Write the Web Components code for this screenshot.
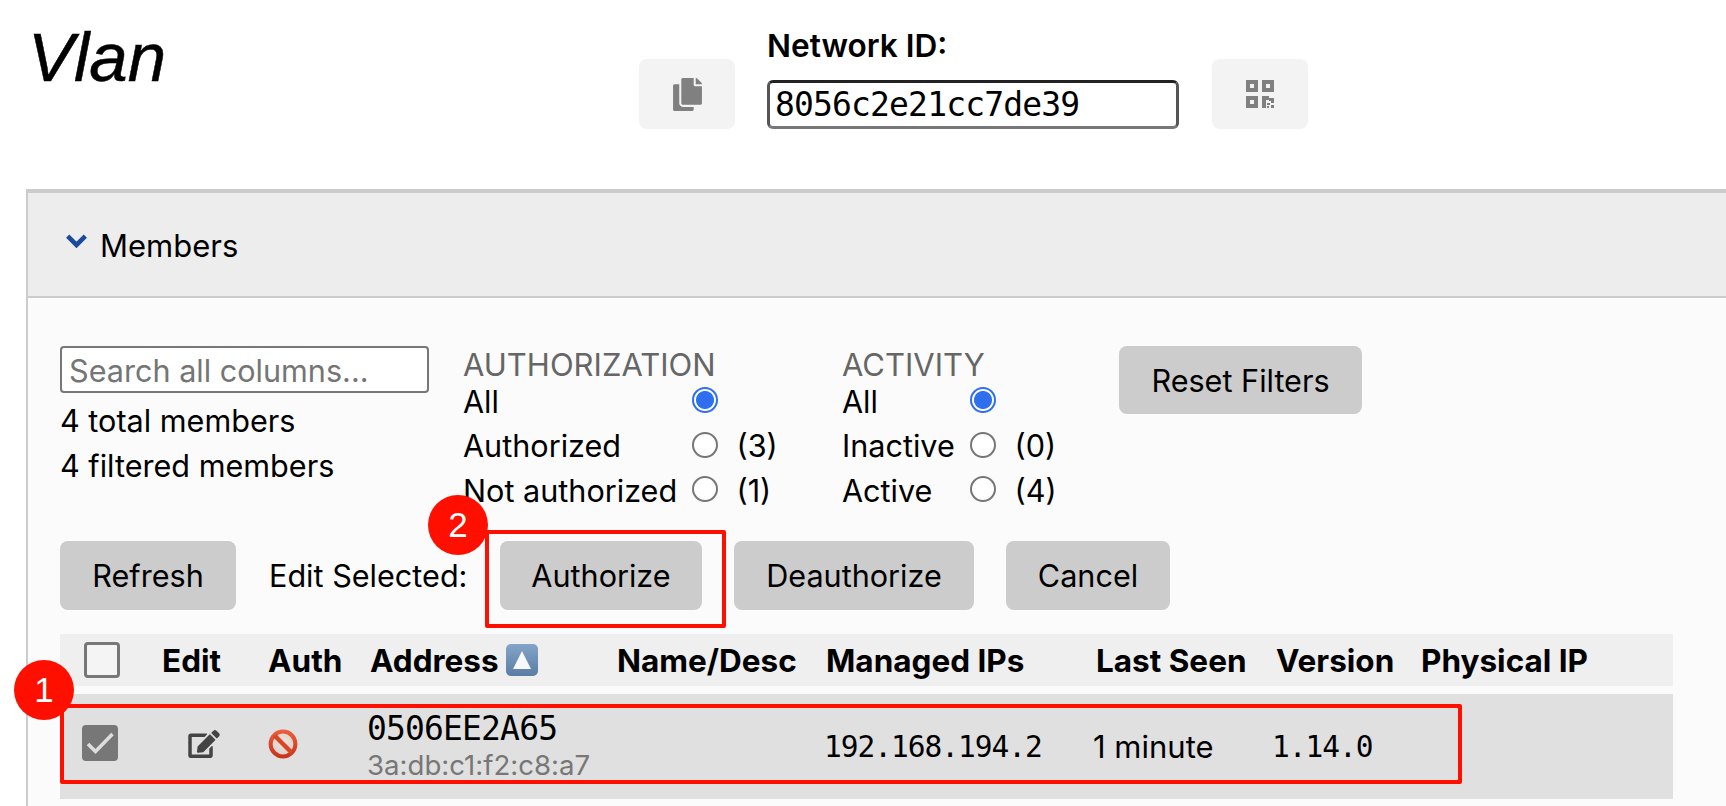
<!DOCTYPE html>
<html lang="en">
<head>
<meta charset="utf-8">
<title>Vlan</title>
<style>
  html, body { margin: 0; height: 100%; overflow: hidden; background: #fff; }
  body { position: relative; font-family: Inter, "Liberation Sans", sans-serif; font-size: 30.6px; color: #000; }
</style>
</head>
<body>
<network-header name="Vlan" network-id="8056c2e21cc7de39"></network-header>
<members-panel>
  <members-filters></members-filters>
  <members-actions></members-actions>
  <members-table></members-table>
</members-panel>
<note-box style="left:60px;top:704px;width:1402px;height:80px"></note-box>
<note-box style="left:485px;top:530px;width:241px;height:98px"></note-box>
<note-bubble style="left:14px;top:660px">1</note-bubble>
<note-bubble style="left:428px;top:495px">2</note-bubble>

<script>
// small helper, every element below just sets its own shadow markup
class ShadowEl extends HTMLElement {
  render(html) {
    this.shadow = this.shadowRoot || this.attachShadow({ mode: 'open' });
    this.shadow.innerHTML = html;
  }
}

class GreyButton extends ShadowEl {
  connectedCallback() {
    this.render(`
      <style>
        :host { display: block; }
        button {
          display: block; width: 100%; height: 100%; border: 0; padding: 0; margin: 0;
          background: #ccc; border-radius: 8px; color: #000; cursor: pointer;
          font: inherit; letter-spacing: inherit;
        }
      </style>
      <button><slot></slot></button>`);
  }
}
customElements.define('grey-button', GreyButton);

class IconButton extends ShadowEl {
  connectedCallback() {
    this.render(`
      <style>
        :host { display: flex; align-items: center; justify-content: center; width: 96px; height: 70px;
                background: #f3f3f3; border-radius: 8px; color: #808080; cursor: pointer; }
      </style>
      <slot></slot>`);
  }
}
customElements.define('icon-button', IconButton);

class NetworkHeader extends ShadowEl {
  connectedCallback() {
    const name = this.getAttribute('name');
    const id = this.getAttribute('network-id');
    this.render(`
      <style>
        :host { display: flex; height: 189px; box-sizing: border-box; }
        h1 { width: 639px; margin: 0; padding: 16px 0 0 28px; box-sizing: border-box; font: italic 400 69px/84px "Liberation Sans", sans-serif; -webkit-text-stroke: .5px #000; }
        icon-button { margin-top: 59px; }
        .net { width: 412px; margin: 0 33px 0 32px; padding-top: 26px; box-sizing: border-box; }
        label { display: block; height: 54px; font-size: 31.6px; line-height: 40px; font-weight: 600; }
        input { display: block; width: 100%; height: 49px; box-sizing: border-box; margin: 0; padding: 0 5px;
                border: 3.5px solid; border-color: #222 #555 #777 #555; border-radius: 6px; background: #fff; color: #000; outline: 0;
                font: 33px "DejaVu Sans Mono", monospace; letter-spacing: -.85px; }
        svg { display: block; }
      </style>
      <h1>${name}</h1>
      <icon-button>
        <svg width="29" height="33" viewBox="0 0 448 512" fill="currentColor"><path d="M320 448v40c0 13.255-10.745 24-24 24H24c-13.255 0-24-10.745-24-24V120c0-13.255 10.745-24 24-24h72v296c0 30.879 25.121 56 56 56h168zm0-344V0H152c-13.255 0-24 10.745-24 24v368c0 13.255 10.745 24 24 24h272c13.255 0 24-10.745 24-24V128H344c-13.2 0-24-10.8-24-24zm120.971-31.029L375.029 7.029A24 24 0 0 0 358.059 0H352v96h96v-6.059a24 24 0 0 0-7.029-16.97z"/></svg>
      </icon-button>
      <div class="net">
        <label>Network ID:</label>
        <input value="${id}" spellcheck="false">
      </div>
      <icon-button>
        <svg width="28" height="28" viewBox="0 0 28 28" fill="currentColor">
          <path fill-rule="evenodd" d="M0 0h12v12H0zM4 4v4h4V4zM16 0h12v12H16zM20 4v4h4V4zM0 16h12v12H0zM4 20v4h4v-4z"/>
          <path d="M16 16h4v12h-4zM20 16h3v4h-3zM23 18h5v5h-3v-2h-2zM21 23h3v2h-3zM25 25h3v3h-3zM21 26h2v2h-2z"/>
        </svg>
      </icon-button>`);
  }
}
customElements.define('network-header', NetworkHeader);

class MembersPanel extends ShadowEl {
  connectedCallback() {
    this.render(`
      <style>
        :host { display: block; margin: 0 -10px 0 26px; border: solid #ccc; border-width: 4px 0 0 2px; }
        .head { display: flex; align-items: center; height: 103px; padding-left: 38px; background: #ededed; border-bottom: 2px solid #ccc; }
        .head svg { display: block; margin: -8px 13px 0 0; }
        .head span { font-size: 31px; padding-top: 2px; }
        .body { height: 600px; padding: 48px 0 0 32px; background: #fbfbfb; }
      </style>
      <div class="head">
        <svg width="21" height="14" viewBox="0 0 21 14" fill="none" stroke="#1c4a9c" stroke-width="4.6"><path d="M1.7 2.2l8.8 8.8 8.8-8.8"/></svg>
        <span>Members</span>
      </div>
      <div class="body"><slot></slot></div>`);
  }
}
customElements.define('members-panel', MembersPanel);

class FilterGroup extends ShadowEl {
  connectedCallback() {
    const labelWidth = this.getAttribute('label-width');
    const opts = JSON.parse(this.getAttribute('options'));
    const rows = opts.map((o, i) => `
      <span class="lbl">${o[0]}</span>
      <span class="radio ${i == 0 ? 'on' : ''}"></span>
      <span class="cnt">${o[1]}</span>`).join('');
    this.render(`
      <style>
        :host { display: block; }
        .title { height: 33px; line-height: 37px; color: #666; font-size: 31px; }
        .grid { display: grid; grid-template-columns: ${labelWidth}px 26px auto; grid-auto-rows: 44.5px; align-items: center; }
        .lbl { white-space: nowrap; }
        .radio { width: 26px; height: 26px; box-sizing: border-box; border: 2px solid #767676; border-radius: 50%; background: #fff; margin-top: -2px; }
        .radio.on { border-color: #2f6fed; background: radial-gradient(circle, #2f6fed 0 8.5px, #fff 9.5px); }
        .cnt { padding-left: 18.5px; }
      </style>
      <div class="title">${this.getAttribute('title')}</div>
      <div class="grid">${rows}</div>`);
  }
}
customElements.define('filter-group', FilterGroup);

class MembersFilters extends ShadowEl {
  connectedCallback() {
    this.render(`
      <style>
        :host { display: flex; height: 195px; }
        .search { width: 369px; margin-right: 34px; }
        input { display: block; width: 100%; height: 47px; box-sizing: border-box; margin: 0; padding: 2px 7px 0;
                border: 2px solid #777; border-radius: 4px; background: #fff; font: inherit; outline: 0; }
        input::placeholder { color: #757575; opacity: 1; }
        .count { line-height: 45px; }
        .count:first-of-type { margin-top: 5px; }
        filter-group.auth { width: 379px; }
        filter-group.act { width: 277px; }
        grey-button { width: 243px; height: 68px; }
      </style>
      <div class="search">
        <input placeholder="Search all columns...">
        <div class="count">4 total members</div>
        <div class="count">4 filtered members</div>
      </div>
      <filter-group class="auth" title="AUTHORIZATION" label-width="229"
        options='[["All",""],["Authorized","(3)"],["Not authorized","(1)"]]'></filter-group>
      <filter-group class="act" title="ACTIVITY" label-width="128"
        options='[["All",""],["Inactive","(0)"],["Active","(4)"]]'></filter-group>
      <grey-button>Reset Filters</grey-button>`);
  }
}
customElements.define('members-filters', MembersFilters);

class MembersActions extends ShadowEl {
  connectedCallback() {
    this.render(`
      <style>
        :host { display: flex; align-items: center; height: 69px; }
        grey-button { height: 69px; flex: none; }
        .lbl { padding-left: 33px; box-sizing: border-box; white-space: nowrap; }
      </style>
      <grey-button style="width:176px">Refresh</grey-button>
      <span class="lbl" style="width:264px">Edit Selected:</span>
      <grey-button style="width:202px;margin-right:32px">Authorize</grey-button>
      <grey-button style="width:240px;margin-right:32px">Deauthorize</grey-button>
      <grey-button style="width:164px">Cancel</grey-button>`);
  }
}
customElements.define('members-actions', MembersActions);

class MemberRow extends ShadowEl {
  connectedCallback() {
    this.render(`
      <style>
        :host { display: grid; grid-template-columns: 128px 80px 99px 457px 269px 179px 1fr; align-items: center;
                height: 105px; margin-top: 8px; background: #e0e0e0; font: 29.5px "DejaVu Sans Mono", monospace; letter-spacing: -1.02px; color: #000; }
        .check { width: 36px; height: 36px; margin-left: 22px; margin-top: -7px; background: #777; border-radius: 4px; }
        .check svg, .edit svg, .auth svg { display: block; }
        .edit, .auth { margin-top: -6px; }
        .addr { margin-top: -6px; }
        .addr b { display: block; font-weight: 400; font-size: 33px; letter-spacing: -.85px; line-height: 42px; }
        .addr small { display: block; font: 27.6px/30px Inter, "Liberation Sans", sans-serif; letter-spacing: 0; color: #777; }
        .time { font-family: Inter, "Liberation Sans", sans-serif; font-size: 31px; letter-spacing: 0; }
      </style>
      <div><div class="check">
        <svg width="36" height="36" viewBox="0 0 36 36" fill="none" stroke="#ddd" stroke-width="3.6"><path d="M6 19l7.500 7.500L30.500 9"/></svg>
      </div></div>
      <div class="edit">
        <svg width="32" height="28" viewBox="0 0 576 512" fill="#444"><path d="M402.6 83.2l90.2 90.2c3.8 3.8 3.8 10 0 13.8L274.4 405.6l-92.8 10.3c-12.4 1.4-22.9-9.1-21.5-21.5l10.3-92.8L388.8 83.2c3.8-3.8 10-3.8 13.8 0zm162-22.9l-48.8-48.8c-15.2-15.2-39.9-15.2-55.2 0l-35.4 35.4c-3.8 3.8-3.8 10 0 13.8l90.2 90.2c3.8 3.8 10 3.8 13.8 0l35.4-35.4c15.2-15.3 15.2-40 0-55.2zM384 346.2V448H64V128h229.8c3.2 0 6.2-1.3 8.5-3.5l40-40c7.6-7.6 2.2-20.5-8.5-20.5H48C21.5 64 0 85.5 0 112v352c0 26.5 21.5 48 48 48h352c26.5 0 48-21.5 48-48V306.2c0-10.7-12.9-16-20.5-8.5l-40 40c-2.2 2.3-3.5 5.3-3.5 8.5z"/></svg>
      </div>
      <div class="auth">
        <svg width="30" height="30" viewBox="0 0 30 30">
          <defs>
            <radialGradient id="ne" cx="50%" cy="45%" r="60%"><stop offset="0" stop-color="#f0e6de"/><stop offset="1" stop-color="#d6cdc6"/></radialGradient>
            <linearGradient id="ner" x1="0" y1="0" x2="0" y2="1"><stop offset="0" stop-color="#ea5c3e"/><stop offset="1" stop-color="#c8351c"/></linearGradient>
          </defs>
          <circle cx="15" cy="15" r="12.400" fill="url(#ne)" stroke="url(#ner)" stroke-width="4"/>
          <path d="M6.500 6.500l17 17" stroke="#dc4426" stroke-width="4.400"/>
        </svg>
      </div>
      <div class="addr"><b>0506EE2A65</b><small>3a:db:c1:f2:c8:a7</small></div>
      <div>192.168.194.2</div>
      <div class="time">1 minute</div>
      <div>1.14.0</div>`);
  }
}
customElements.define('member-row', MemberRow);

class MembersTable extends ShadowEl {
  connectedCallback() {
    this.render(`
      <style>
        :host { display: block; width: 1613px; margin-top: 24px; }
        .head { display: grid; grid-template-columns: 102px 106px 102px 247px 209px 270px 180px 145px 1fr; align-items: center;
                height: 52px; background: #efefef; font-weight: 700; font-size: 31.5px; white-space: nowrap; }
        .box { width: 36px; height: 36px; box-sizing: border-box; margin-left: 24px; border: 3.5px solid #777; border-radius: 4px; background: #f4f4f4; }
        .addr { display: flex; align-items: center; gap: 7px; }
        .addr svg { display: block; }
      </style>
      <div class="head">
        <div><div class="box"></div></div>
        <div>Edit</div>
        <div>Auth</div>
        <div class="addr">Address
          <svg width="32" height="32" viewBox="0 0 32 32">
            <defs><linearGradient id="up" x1="0" y1="0" x2="0" y2="1"><stop offset="0" stop-color="#84a4c8"/><stop offset="1" stop-color="#5a7da5"/></linearGradient></defs>
            <rect width="32" height="32" rx="5" fill="url(#up)"/>
            <path d="M16 7l9 18H7z" fill="#f6f8fa"/>
          </svg>
        </div>
        <div>Name/Desc</div>
        <div>Managed IPs</div>
        <div>Last Seen</div>
        <div>Version</div>
        <div>Physical IP</div>
      </div>
      <member-row></member-row>`);
  }
}
customElements.define('members-table', MembersTable);

// red annotations drawn over the screenshot
class NoteBox extends ShadowEl {
  connectedCallback() {
    this.render(`<style>:host { position: absolute; display: block; box-sizing: border-box; border: 4px solid #ff0f00; border-radius: 2px; }</style>`);
  }
}
customElements.define('note-box', NoteBox);

class NoteBubble extends ShadowEl {
  connectedCallback() {
    this.render(`
      <style>
        :host { position: absolute; display: flex; align-items: center; justify-content: center; width: 60px; height: 60px;
                border-radius: 50%; background: #ff0f00; color: #fff; font: 35px "Liberation Sans", sans-serif; }
      </style>
      <slot></slot>`);
  }
}
customElements.define('note-bubble', NoteBubble);
</script>
</body>
</html>
